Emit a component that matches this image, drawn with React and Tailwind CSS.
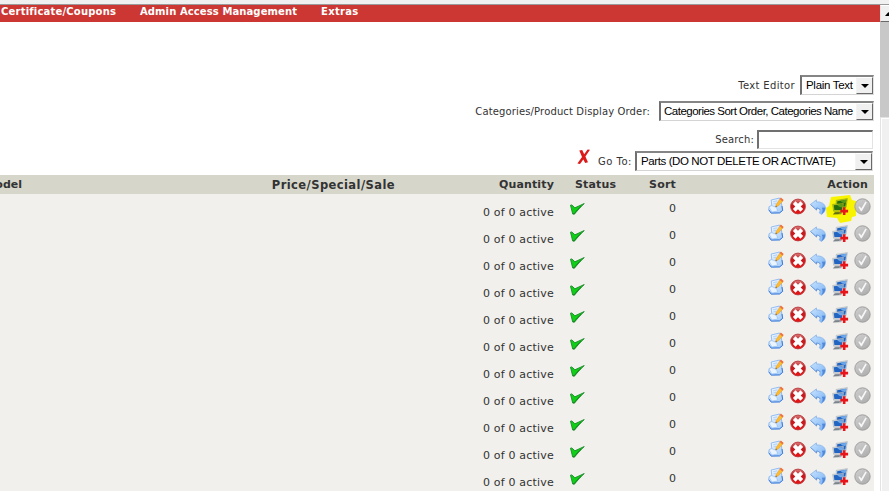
import React from "react";

const NoteIcon = () => (
  <svg width="16" height="17" viewBox="0 0 16 17">
    <defs>
      <linearGradient id="page" x1="0" y1="0" x2="1" y2="1">
        <stop offset="0" stopColor="#ffffff" />
        <stop offset="1" stopColor="#9cc8fa" />
      </linearGradient>
    </defs>
    <path d="M3.2 3 L11.5 1 L13.2 5 L14.6 13.4 L11.6 15.8 L3 16 L0.7 12.6 L1.2 9.5 L3.8 8.8 Z" fill="url(#page)" stroke="#7fb0f0" strokeWidth="0.8" />
    <path d="M14 9 L14.7 13.4 L11.6 15.9 L3.2 16.1 L0.8 12.8" fill="none" stroke="#3f7bd8" strokeWidth="1" />
    <path d="M1 10 L3.6 8.6 L8.4 10.4 L9.8 14 L3.8 15 Z" fill="#eaf4ff" stroke="#8ab8f2" strokeWidth="0.6" />
    <path d="M5 4.8 L9 3.9 M5.4 6.8 L8 6.4" stroke="#a9cdf8" strokeWidth="0.8" />
    <path d="M12.3 1.6 L15 3.8 L10.2 9 L7.6 10 L8.3 7.2 Z" fill="#fdbb2d" stroke="#e8982a" strokeWidth="0.5" />
    <path d="M12.9 0.6 L15.7 2.9 L14.5 4.4 L11.7 2.1 Z" fill="#ee7040" />
    <path d="M8 8.6 L7.5 10.1 L9 9.6 Z" fill="#555" />
  </svg>
);

const DeleteIcon = () => (
  <svg width="16" height="17" viewBox="0 0 16 17">
    <defs>
      <linearGradient id="redDisc" x1="0" y1="0" x2="0" y2="1">
        <stop offset="0" stopColor="#d98080" />
        <stop offset="0.4" stopColor="#c41c20" />
        <stop offset="1" stopColor="#ea1414" />
      </linearGradient>
    </defs>
    <circle cx="8" cy="8.5" r="7.4" fill="url(#redDisc)" stroke="#b9383a" strokeWidth="0.9" />
    <path d="M4.2 4.7 L11.8 12.3 M11.8 4.7 L4.2 12.3" stroke="#fff" strokeWidth="3.8" />
  </svg>
);

const MoveIcon = () => (
  <svg width="16" height="16" viewBox="0 0 16 16">
    <defs>
      <linearGradient id="arrow" x1="0" y1="0" x2="1" y2="1">
        <stop offset="0" stopColor="#c9e4ff" />
        <stop offset="1" stopColor="#7ab2f4" />
      </linearGradient>
    </defs>
    <path d="M0.5 5.4 L6.4 0.9 L6.5 3 C11.5 2.6 15 4.9 15.4 8.6 C15.5 11.4 14.2 13.8 11.4 15.4 L9.2 13.8 C10.8 11.6 10 9.3 6.6 9 L6.6 11 Z" fill="url(#arrow)" stroke="#86b2ea" strokeWidth="0.8" />
    <path d="M15.2 8.5 C15.4 11.3 14.2 13.6 11.6 15.2 C12.8 12.6 13 10.6 11.8 8.8 Z" fill="#5088dc" />
    <path d="M0.6 5.6 L6.5 11 L6.6 9 C8.5 9.1 9.8 9.9 10.3 11" fill="none" stroke="#5f93da" strokeWidth="0.8" />
  </svg>
);

const CopyIcon = ({ lit }) => {
  const frame = lit ? "#b5c916" : "#c9d2da";
  const screen = lit ? "#246a10" : "#2264c2";
  const shine = lit ? "#5a9c18" : "#6fa8ea";
  const edge = lit ? "#7c9010" : "#a3abb4";
  return (
    <svg width="17" height="18" viewBox="0 0 17 18">
      <path d="M4.2 2.4 L15.4 0.6 L14 9.6 L4.2 10 Z" fill={frame} stroke={edge} strokeWidth="0.5" />
      <path d="M5.2 3.2 L14.4 1.8 L13.3 8.6 L5 8.8 Z" fill={screen} />
      <path d="M8.5 2.7 L14.4 1.8 L13.9 4.8 C12 5.2 10 4.6 8.5 2.7 Z" fill={shine} />
      <path d="M0.6 6.4 L11.6 5.2 L10.7 13 L1.6 13.2 Z" fill={frame} stroke={edge} strokeWidth="0.5" />
      <path d="M1.8 7.3 L10.6 6.3 L9.9 12 L2.4 12.1 Z" fill={screen} />
      <path d="M5.2 6.9 L10.6 6.3 L10.2 9.2 C8 9.2 6.4 8.6 5.2 6.9 Z" fill={shine} />
      <path d="M0.8 16.4 L3 13.8 L10 13.6 L9.4 16.2 Z" fill={lit ? "#8c9a10" : "#a4abb2"} />
      <path d="M1.2 16.2 L3.2 14.4 L8 14.2 L7 16 Z" fill={lit ? "#626c10" : "#7c838b"} />
      <path d="M10.9 9.2 h2.6 v2.6 h2.6 v2.6 h-2.6 v2.6 h-2.6 v-2.6 h-2.6 v-2.6 h2.6 z" fill="#e8141a" />
    </svg>
  );
};

const GrayCheckIcon = () => (
  <svg width="17" height="17" viewBox="0 0 17 17">
    <defs>
      <linearGradient id="grayDisc" x1="0" y1="0" x2="0.6" y2="1">
        <stop offset="0" stopColor="#d0d0d0" />
        <stop offset="0.55" stopColor="#bfbfbf" />
        <stop offset="1" stopColor="#b0b0b0" />
      </linearGradient>
    </defs>
    <circle cx="8.5" cy="8.5" r="7.7" fill="url(#grayDisc)" stroke="#9b9b9b" strokeWidth="0.9" />
    <path d="M4.2 8.8 L5.8 8.4 L7.3 10.6 L11.4 3.6 L12.8 4.2 L7.8 13.2 L6.9 13.2 Z" fill="#f7f7f7" />
  </svg>
);

const GreenCheck = () => (
  <svg width="15" height="12" viewBox="0 0 15 12">
    <path d="M0.5 2.2 L1.8 1.9 L4.9 4.8 L14.3 0.5 C11 3.6 7.3 7.4 4.4 11.2 L2.7 11 Z" fill="#0fd016" stroke="#1c8a2c" strokeWidth="0.9" />
    <path d="M3.2 10.6 L4.2 10.8 C6.5 7.6 8.5 5.5 11 3.3" fill="none" stroke="#17761f" strokeWidth="0.8" />
  </svg>
);

const RedX = () => (
  <svg width="14" height="16" viewBox="0 0 14 16">
    <path d="M2.3 1.6 L5.2 1 L7.2 5.2 L10.6 0.6 L13 0.8 L8.4 7.6 L11 13.2 L8.2 14 L6.3 10.4 L3 15 L0.4 14.6 L5 8 Z" fill="#dc1a1a" />
  </svg>
);

const Select = ({ className, textClass, children }) => (
  <div className={`flex h-[20px] border-t-2 border-l-2 border-r border-b border-t-[#858585] border-l-[#707070] border-r-[#e3e3e3] border-b-[#d4d4d4] bg-white ${className}`}>
    <span className={`min-w-0 grow font-['Liberation_Sans',Arial,sans-serif] text-[11.5px] leading-[17px] whitespace-nowrap text-black ${textClass}`}>{children}</span>
    <span className="flex w-[17px] shrink-0 items-center justify-center border border-t-[#fff] border-l-[#f4f4f4] border-r-[#696969] border-b-[#696969] bg-[#f0f0f0]">
      <svg width="8" height="4" viewBox="0 0 8 4"><path d="M0 0 H8 L4 4 Z" fill="#000" /></svg>
    </span>
  </div>
);

const rows = Array.from({ length: 11 }, (_, i) => i);

function Row({ lit }) {
  return (
    <div className="flex h-[27px] text-[11px] leading-[14px] text-[#333]">
      <span className="w-[554px] pt-[12px] text-right tracking-[0.2px]">0 of 0 active</span>
      <span className="w-[76px] pt-[9px] pl-[16px]"><GreenCheck /></span>
      <span className="w-[46px] pt-[8px] text-right">0</span>
      <span className="flex grow items-start pt-[4px] pl-[92px]">
        <span className="-mt-px w-[22px]"><NoteIcon /></span>
        <span className="w-[20px]"><DeleteIcon /></span>
        <span className="w-[22px] pt-px"><MoveIcon /></span>
        <span className="relative w-[22px]">
          {lit && (
            <svg className="absolute -top-[3px] -left-[6px]" width="31" height="28" viewBox="0 0 31 28">
              <path d="M5 2 L24 0 L26 5 L30 6 L30 21 L26 22 L25 26 L14 28 L11 23 L1 22 L0 13 L3 11 Z" fill="#f8f400" />
            </svg>
          )}
          <span className="relative"><CopyIcon lit={lit} /></span>
        </span>
        <span className="relative"><GrayCheckIcon /></span>
      </span>
    </div>
  );
}

export default function App() {
  return (
    <div className="h-[491px] w-[889px] overflow-hidden bg-white font-['DejaVu_Sans',Verdana,sans-serif] text-[#333]">
      <div className="h-[5px] border-b border-[#9a9a9a] bg-[#f0f0f0]" />
      <div className="flex h-[486px]">
        <main className="w-[880px] shrink-0">
          <nav className="flex h-[17px] bg-[#cc3733] pl-px text-[10px] leading-[14px] font-bold whitespace-nowrap text-white">
            <span className="w-[139px] tracking-[0.2px]">Certificate/Coupons</span>
            <span className="w-[181px] tracking-[0.1px]">Admin Access Management</span>
            <span className="tracking-[0.3px]">Extras</span>
          </nav>

          <section className="flex h-[153px] flex-col items-end pt-[53px] text-[10px] whitespace-nowrap">
            <div className="mr-[6px] flex h-[20px] items-center">
              <span className="mr-[5px] tracking-[0.35px]">Text Editor</span>
              <Select className="w-[74px]" textClass="pl-[4px] tracking-[-0.3px]">Plain Text</Select>
            </div>
            <div className="mt-[6px] mr-[6px] flex h-[20px] items-center">
              <span className="mr-[9px] tracking-[0.14px]">Categories/Product Display Order:</span>
              <Select className="w-[215px]" textClass="pl-[3px] tracking-[-0.5px]">Categories Sort Order, Categories Name</Select>
            </div>
            <div className="mt-[8px] mr-[7px] flex h-[20px] items-center">
              <span className="mr-[3px] tracking-[0.15px]">Search:</span>
              <div className="h-[19px] w-[116px] border-t-2 border-l-2 border-r border-b border-t-[#707070] border-l-[#707070] border-r-[#e3e3e3] border-b-[#e3e3e3]" />
            </div>
            <div className="mt-[2px] mr-[7px] flex h-[20px] items-center">
              <span className="mr-[7px] -mt-[8px]"><RedX /></span>
              <span className="mr-[3px] tracking-[0.5px]">Go To:</span>
              <Select className="w-[238px]" textClass="pl-[4px] tracking-[-0.4px]">Parts (DO NOT DELETE OR ACTIVATE)</Select>
            </div>
          </section>

          <section className="w-[874px] bg-[#f1f0ec]">
            <div className="flex h-[19px] bg-[#d6d6cb] text-[11px] leading-[20px] font-bold whitespace-nowrap">
              <span className="flex w-[22px] justify-end overflow-hidden">Model</span>
              <span className="w-[373px] text-right text-[11.5px] tracking-[0.42px]">Price/Special/Sale</span>
              <span className="w-[159px] text-right tracking-[0.15px]">Quantity</span>
              <span className="w-[76px] pl-[21px] tracking-[0.15px]">Status</span>
              <span className="w-[46px] text-right tracking-[0.2px]">Sort</span>
              <span className="w-[192px] text-right tracking-[0.2px]">Action</span>
            </div>
            {rows.map((i) => <Row key={i} lit={i === 0} />)}
          </section>
        </main>

        <aside className="flex w-[9px] shrink-0 flex-col overflow-hidden bg-[#c8c8c8]">
          <div className="h-[17px] shrink-0 border-t border-l border-b border-t-[#fff] border-l-[#e3e3e3] border-b-[#696969] bg-[#f0f0f0] pt-[6px] pl-[4px]">
            <svg width="7" height="4" viewBox="0 0 7 4"><path d="M3.5 0 L7 4 H0 Z" fill="#000" /></svg>
          </div>
          <div className="h-[95px] shrink-0" />
          <div className="grow border-t border-l border-[#e3e3e3] bg-[#f0f0f0]">
            <div className="h-full border-t border-l border-white" />
          </div>
        </aside>
      </div>
    </div>
  );
}
